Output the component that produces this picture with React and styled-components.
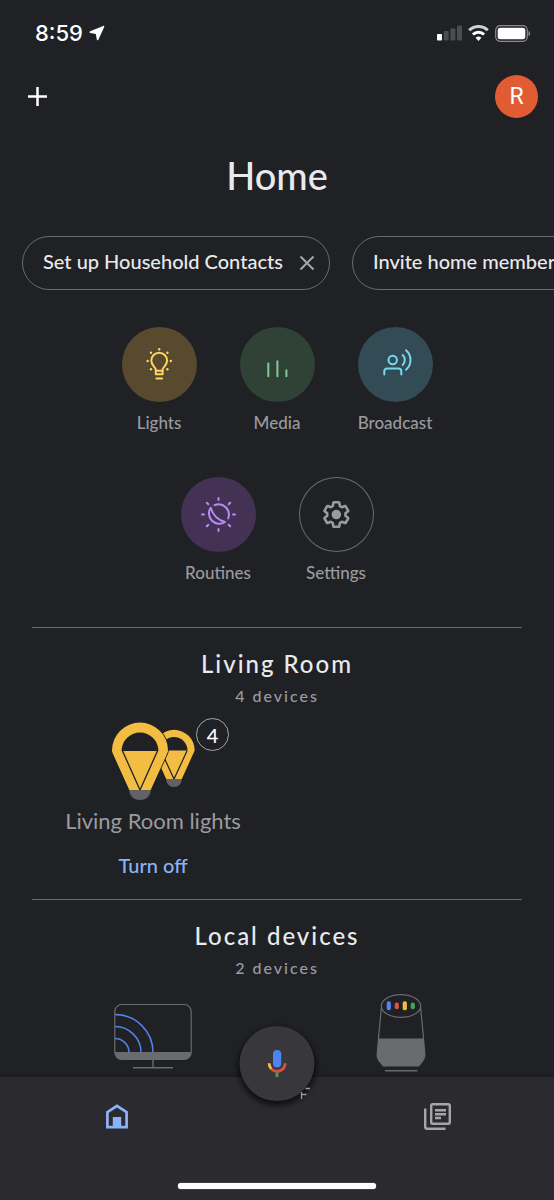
import styled, { createGlobalStyle } from 'styled-components';

const GlobalStyle = createGlobalStyle`
	* {
		box-sizing: border-box;
	}

	body {
		margin: 0;
		background-color: #202124;
		color: #e8eaed;
		font-family: Lato, 'Open Sans', sans-serif;
	}

	button {
		padding: 0;
		border: none;
		background: none;
		color: inherit;
		font: inherit;
		cursor: pointer;
	}

	h1,
	h2,
	p {
		margin: 0;
	}

	svg {
		display: block;
		flex-shrink: 0;
	}
`;

const Page = styled.div`
	display: flex;
	flex-direction: column;
	min-height: 100vh;
	overflow-x: clip;
`;

const StatusBar = styled.div`
	display: flex;
	align-items: center;
	justify-content: space-between;
	height: 66px;
	padding: 0 23px 0 35px;
	color: #fff;
`;

const StatusGroup = styled.div`
	display: flex;
	align-items: center;
	gap: 6px;
`;

const Clock = styled.time`
	font-family: Inter, sans-serif;
	font-size: 22px;
	font-weight: 500;
`;

const Header = styled.header`
	display: flex;
	align-items: center;
	justify-content: space-between;
	padding: 9px 16px 0;
`;

const RoundButton = styled.button`
	display: flex;
	align-items: center;
	justify-content: center;
	width: 43px;
	height: 43px;
	border-radius: 50%;
	background-color: ${({ $background = 'transparent' }) => $background};
	font-family: Roboto, sans-serif;
	font-size: 23px;
	color: #fff;
`;

const Title = styled.h1`
	padding-top: 33px;
	font-size: 38px;
	font-weight: 500;
	line-height: 48px;
	text-align: center;
`;

const Chips = styled.div`
	display: flex;
	gap: 22px;
	margin-top: 37px;
	padding-left: 22px;
	overflow: hidden;
`;

const ChipBox = styled.div`
	display: flex;
	flex-shrink: 0;
	align-items: center;
	gap: 16px;
	height: 54px;
	padding: 0 14px 0 20px;
	border: 1px solid #6a6b6f;
	border-radius: 27px;
	font-size: 20px;
	font-weight: 500;
	white-space: nowrap;
`;

const ChipLabel = styled.button`
	padding-bottom: 4px;
`;

const Actions = styled.div`
	display: flex;
	flex-wrap: wrap;
	justify-content: center;
	row-gap: 42px;
	width: 354px;
	max-width: 100%;
	margin: 37px auto 42px;
`;

const ActionButton = styled.button`
	display: flex;
	flex-direction: column;
	align-items: center;
	gap: 9px;
	width: 118px;
	color: #9a9b9f;
	font-size: 17px;
	font-weight: 500;
	line-height: 24px;
`;

const ActionCircle = styled.span`
	display: block;
	width: 75px;
	height: 75px;
	border-radius: 50%;
	background-color: ${({ $background = 'transparent' }) => $background};
	box-shadow: ${({ $outlined }) => ($outlined ? 'inset 0 0 0 1px #6a6b6f' : 'none')};
	color: ${({ $color }) => $color};
`;

const Room = styled.section`
	&::before {
		content: '';
		display: block;
		height: 1px;
		margin: 0 32px;
		background-color: #6a6b6f;
	}
`;

const RoomTitle = styled.h2`
	padding-top: 20px;
	font-size: 24px;
	font-weight: 500;
	letter-spacing: 2px;
	line-height: 32px;
	text-align: center;
`;

const RoomCount = styled.p`
	padding: 4px 0;
	color: #9a9b9f;
	font-size: 16px;
	font-weight: 500;
	letter-spacing: 2px;
	line-height: 24px;
	text-align: center;
`;

const DeviceGrid = styled.div`
	display: grid;
	grid-template-columns: 1fr 1fr;
	justify-items: center;
	padding: 10px 29px 0;
`;

const Device = styled.div`
	display: flex;
	flex-direction: column;
	align-items: center;
`;

const DeviceArt = styled.div`
	position: relative;
`;

const Badge = styled.span`
	position: absolute;
	top: -4px;
	left: 85px;
	display: flex;
	align-items: center;
	justify-content: center;
	width: 33px;
	height: 33px;
	border: 1px solid #a5a6aa;
	border-radius: 50%;
	color: #fff;
	font-size: 20px;
	font-weight: 500;
`;

const DeviceName = styled.p`
	padding-top: 5px;
	color: #9a9b9f;
	font-size: 22px;
	line-height: 32px;
`;

const TextButton = styled.button`
	margin: 12px 0 18px;
	color: #8ab4f8;
	font-size: 20px;
	font-weight: 500;
	line-height: 32px;
`;

const Nav = styled.nav`
	position: sticky;
	bottom: 0;
	display: flex;
	flex-direction: column;
	align-items: center;
	margin-top: auto;
	background-color: #2b2b2f;
	box-shadow: 0 -1px 4px rgba(0, 0, 0, 0.25);
`;

const NavItems = styled.div`
	display: flex;
	justify-content: space-between;
	width: 100%;
	padding: 0 95px;
`;

const NavLink = styled.a`
	display: flex;
	align-items: center;
	justify-content: center;
	width: 44px;
	height: 78px;
	color: ${({ $active }) => ($active ? '#8ab4f8' : '#a5a6aa')};
`;

const MicButton = styled.button`
	position: absolute;
	top: -51px;
	left: 50%;
	width: 75px;
	height: 75px;
	border-radius: 50%;
	background-color: #38373b;
	box-shadow: 0 3px 5px 2px rgba(0, 0, 0, 0.6);
	transform: translateX(-50%);
`;

const HomeIndicator = styled.div`
	width: 198px;
	height: 6px;
	margin: 28px 0 11px;
	border-radius: 3px;
	background-color: #fff;
	box-shadow: 0 0 1px #fff;
`;

const LocationIcon = () => (
	<svg width="16" height="16" viewBox="0 0 16 16" fill="currentColor">
		<path d="M14.2.9 1.1 6.3c-.9.4-.8 1.5.2 1.7l5.500.9 1 5.500c.2 1 1.300 1.200 1.700.2L15.200 2c.3-.8-.2-1.400-1-1.100z" />
	</svg>
);

const SignalIcon = () => (
	<svg width="25" height="16" viewBox="0 0 25 16" fill="#4c4d50">
		<rect y="9" width="5" height="6.5" rx="1" fill="#fff" />
		<rect x="6.7" y="6" width="5" height="9.5" rx="1" />
		<rect x="13.4" y="3.5" width="5" height="12" rx="1" />
		<rect x="20" y=".5" width="5" height="15" rx="1" />
	</svg>
);

const WifiIcon = () => (
	<svg width="21" height="16" viewBox="0 0 21 16" fill="none" stroke="#fff" strokeWidth="3">
		<path d="M1.2 5.3a13.2 13.2 0 0 1 18.6 0" stroke="#cfd0d2" />
		<path d="M4.9 9.5a8 8 0 0 1 11.2 0" />
		<path d="M10.5 16 7.6 12.7a4.3 4.3 0 0 1 5.8 0z" fill="#fff" stroke="none" />
	</svg>
);

const BatteryIcon = () => (
	<svg width="36" height="17" viewBox="0 0 36 17">
		<rect x=".7" y=".7" width="31.6" height="15.6" rx="4.5" fill="none" stroke="#8a8b8e" strokeWidth="1.2" />
		<rect x="2.7" y="2.7" width="27.6" height="11.6" rx="2.5" fill="#fff" />
		<path d="M33.5 6c2.2.6 2.2 4.4 0 5z" fill="#8a8b8e" />
	</svg>
);

const PlusIcon = () => (
	<svg width="19" height="19" viewBox="0 0 19 19" stroke="#fff" strokeWidth="2.5">
		<path d="M9.5 0v19M0 9.5h19" />
	</svg>
);

const CloseIcon = () => (
	<svg width="16" height="16" viewBox="0 0 16 16" stroke="#a5a6aa" strokeWidth="2">
		<path d="m1.5 1.5 13 13m0-13-13 13" />
	</svg>
);

const ActionSvg = ({ children }) => (
	<svg
		width="75"
		height="75"
		viewBox="0 0 75 75"
		fill="none"
		stroke="currentColor"
		strokeWidth="2"
		strokeLinecap="round"
		strokeLinejoin="round"
	>
		{children}
	</svg>
);

const LightsIcon = () => (
	<ActionSvg>
		<path d="M33.8 47.3v-4.8c0-2-4.5-3.7-4.5-8.9a7.9 7.9 0 0 1 15.8 0c0 5.2-4.5 6.9-4.5 8.9v4.8z" />
		<path d="M34 43.7h6.4M34.3 51.5h5.8" />
		<g fill="currentColor" stroke="none">
			<circle cx="37.2" cy="22.3" r="1.2" />
			<circle cx="29" cy="25.8" r="1.2" />
			<circle cx="45.4" cy="25.8" r="1.2" />
			<circle cx="25.6" cy="34" r="1.2" />
			<circle cx="48.8" cy="34" r="1.2" />
			<circle cx="29" cy="42.2" r="1.2" />
			<circle cx="45.4" cy="42.2" r="1.2" />
		</g>
	</ActionSvg>
);

const MediaIcon = () => (
	<ActionSvg>
		<path d="M28.3 36.5v12.7M37.4 34.3v14.9M46.4 43.3v5.9" />
	</ActionSvg>
);

const BroadcastIcon = () => (
	<ActionSvg>
		<circle cx="34.7" cy="33" r="4.2" />
		<path d="M26.3 47.5v-3.3a2.8 2.8 0 0 1 2.8-2.8h11.4a2.8 2.8 0 0 1 2.8 2.8v3.3" />
		<path d="M44.7 28c2.800 2.600 2.800 7.400 0 10M48 23.300c6 5.200 6 14.200 0 19.400" />
	</ActionSvg>
);

const RoutinesIcon = () => (
	<ActionSvg>
		<path d="M33.6 28.2a10.3 10.3 0 0 1 13.6 13.2" />
		<path d="M29.7 30.7a10.3 10.3 0 0 0 14.3 14.3c-6.5-1.7-12.3-7-14.3-14.3z" />
		<path d="M37.5 21v2M37.5 52v2M21 37.5h2M52 37.5h2M25.8 25.8l1.5 1.5M47.7 47.7l1.5 1.5M25.8 49.2l1.5-1.5M47.7 27.3l1.5-1.5" />
	</ActionSvg>
);

const SettingsIcon = () => (
	<ActionSvg>
		<g transform="translate(22.7 22.9) scale(1.22)">
			<path
				strokeWidth="2.1"
				d="M19.43 12.98c.04-.32.07-.64.07-.98s-.03-.66-.07-.98l2.11-1.65c.19-.15.24-.42.12-.64l-2-3.46c-.09-.16-.26-.25-.44-.25-.06 0-.12.01-.17.03l-2.49 1c-.52-.4-1.08-.73-1.69-.98l-.38-2.65C14.46 2.18 14.25 2 14 2h-4c-.25 0-.46.18-.49.42l-.38 2.65c-.61.25-1.17.59-1.69.98l-2.49-1c-.06-.02-.12-.03-.18-.03-.17 0-.34.09-.43.25l-2 3.46c-.13.22-.07.49.12.64l2.11 1.65c-.04.32-.07.65-.07.98s.03.66.07.98l-2.11 1.65c-.19.15-.24.42-.12.64l2 3.46c.09.16.26.25.44.25.06 0 .12-.01.17-.03l2.49-1c.52.4 1.08.73 1.69.98l.38 2.65c.03.24.24.42.49.42h4c.25 0 .46-.18.49-.42l.38-2.65c.61-.25 1.17-.59 1.69-.98l2.49 1c.06.02.12.03.18.03.17 0 .34-.09.43-.25l2-3.46c.12-.22.07-.49-.12-.64z"
			/>
			<circle cx="12" cy="12" r="3.9" fill="currentColor" stroke="none" />
		</g>
	</ActionSvg>
);

const BulbsArt = () => (
	<svg width="84" height="78" viewBox="0 0 84 78">
		<path d="M42.3 28.5a20.7 20.7 0 0 1 41.4 0L70.8 57H55.2z" fill="#f2bd42" />
		<path d="M49.5 28.5a13.5 13.5 0 0 1 27 0z" fill="#202124" />
		<path d="M49.8 28.5 63 57l13.2-28.5" fill="none" stroke="#202124" strokeWidth="1.2" />
		<path d="M55.2 57h15.6c0 4.5-3.3 8-7.8 8s-7.8-3.5-7.8-8z" fill="#616266" />
		<path
			d="M1 28.5a28 28 0 0 1 56 0c0 1-.2 1.8-.6 2.6L39.7 68H18.3L1.6 31.1A6 6 0 0 1 1 28.5z"
			fill="#f2bd42"
			stroke="#202124"
			strokeWidth="1.6"
			paintOrder="stroke"
		/>
		<path d="M10.5 29a18.5 18.5 0 0 1 37 0z" fill="#202124" />
		<path d="M11.3 28.5 29 68l17.7-39.5" fill="none" stroke="#202124" strokeWidth="1.3" />
		<path d="M18.3 68h21.4c0 6-4.5 10-10.7 10s-10.7-4-10.7-10z" fill="#616266" />
	</svg>
);

const TvArt = () => (
	<svg width="78" height="78" viewBox="0 0 78 78" fill="none">
		<path d="M1 58h76c0 4.5-2.5 7.5-7 7.5H8c-4.5 0-7-3-7-7.5z" fill="#6a6b6f" />
		<g stroke="#5283ea" strokeWidth="1.5">
			<path d="M1 44.5a14 14 0 0 1 14 14M1 32.5a26 26 0 0 1 26 26M1 20.5a38 38 0 0 1 38 38" />
		</g>
		<rect x=".8" y="10.5" width="76.4" height="55" rx="7" stroke="#6a6b6f" strokeWidth="1.2" />
		<path d="M39 58v15.5M19 73.7h40" stroke="#6a6b6f" strokeWidth="1.4" />
	</svg>
);

const SpeakerArt = () => (
	<svg width="52" height="78" viewBox="0 0 52 78" fill="none" stroke="#6a6b6f" strokeWidth="1.2">
		<path d="M3.5 45h45l1.4 16c0 4-3 7.500-6.400 11h-35C5 68.500 2.100 65 2.100 61z" fill="#6a6b6f" />
		<path d="M6.4 13.5 3.4 45M45.6 13.5l3 31.5" />
		<ellipse cx="26" cy="12" rx="19.7" ry="11.4" />
		<path d="M10 76.8h32.5" strokeWidth="1.5" />
		<g stroke="none">
			<rect x="11.7" y="7.3" width="4.2" height="9" rx="1.8" fill="#4f83ee" />
			<rect x="19.7" y="8.5" width="4.2" height="6.8" rx="2" fill="#d9514a" />
			<rect x="27.7" y="7.3" width="4.2" height="9" rx="1.8" fill="#f2bd42" />
			<rect x="35.7" y="8.5" width="4.2" height="6.8" rx="2" fill="#46a35f" />
		</g>
	</svg>
);

const MicIcon = () => (
	<svg width="75" height="75" viewBox="0 0 75 75" fill="none" strokeWidth="2.8">
		<rect x="33.5" y="24" width="8.2" height="17.5" rx="4.1" fill="#4f83ee" />
		<path d="M29.6 37.3a8 8 0 0 0 2.4 5.7" stroke="#f2bd42" />
		<path d="M32 43a8 8 0 0 0 13.6-5.7" stroke="#dc4f42" />
		<path d="M37.5 46.5V51" stroke="#46a35f" />
		<path d="M66 62.5h4.5M62 66v7M62 68.5h5" stroke="#9a9b9f" strokeWidth="1.3" />
	</svg>
);

const HomeIcon = () => (
	<svg width="22" height="25" viewBox="0 0 22 25">
		<path d="M1.4 23.1V8.2L11 1.9l9.6 6.3v14.9z" fill="none" stroke="currentColor" strokeWidth="2.7" />
		<path d="M6.8 13h8.4v10H6.8z" fill="currentColor" />
	</svg>
);

const FeedIcon = () => (
	<svg width="27" height="27" viewBox="0 0 27 27" fill="none" stroke="currentColor" strokeWidth="2.4">
		<rect x="7.2" y="1.2" width="18.6" height="19.6" rx="1.5" />
		<path d="M1.2 5.5v18.3a2 2 0 0 0 2 2h18.3M11 7.3h11M11 11.3h11M11 15h6" />
	</svg>
);

const Chip = ({ text, onClose }) => (
	<ChipBox>
		<ChipLabel type="button">{text}</ChipLabel>
		<button type="button" aria-label="Dismiss" onClick={onClose}>
			<CloseIcon />
		</button>
	</ChipBox>
);

const Action = ({ label, icon: Icon, color, background, outlined }) => (
	<ActionButton type="button">
		<ActionCircle $background={background} $color={color} $outlined={outlined}>
			<Icon />
		</ActionCircle>
		{label}
	</ActionButton>
);

const ACTIONS = [
	{ label: 'Lights', icon: LightsIcon, color: '#fdd663', background: '#574a2e' },
	{ label: 'Media', icon: MediaIcon, color: '#81c995', background: '#304236' },
	{ label: 'Broadcast', icon: BroadcastIcon, color: '#78d9ec', background: '#324b55' },
	{ label: 'Routines', icon: RoutinesIcon, color: '#b98af5', background: '#443255' },
	{ label: 'Settings', icon: SettingsIcon, color: '#9a9b9f', outlined: true },
];

export default function App() {
	return (
		<Page>
			<GlobalStyle />
			<StatusBar>
				<StatusGroup>
					<Clock>8:59</Clock>
					<LocationIcon />
				</StatusGroup>
				<StatusGroup>
					<SignalIcon />
					<WifiIcon />
					<BatteryIcon />
				</StatusGroup>
			</StatusBar>
			<Header>
				<RoundButton type="button" aria-label="Add">
					<PlusIcon />
				</RoundButton>
				<RoundButton type="button" $background="#e25c33">
					R
				</RoundButton>
			</Header>
			<main>
				<Title>Home</Title>
				<Chips>
					<Chip text="Set up Household Contacts" />
					<Chip text="Invite home members" />
				</Chips>
				<Actions>
					{ACTIONS.map((action) => (
						<Action key={action.label} {...action} />
					))}
				</Actions>
				<Room>
					<RoomTitle>Living Room</RoomTitle>
					<RoomCount>4 devices</RoomCount>
					<DeviceGrid>
						<Device>
							<DeviceArt>
								<BulbsArt />
								<Badge>4</Badge>
							</DeviceArt>
							<DeviceName>Living Room lights</DeviceName>
							<TextButton type="button">Turn off</TextButton>
						</Device>
					</DeviceGrid>
				</Room>
				<Room>
					<RoomTitle>Local devices</RoomTitle>
					<RoomCount>2 devices</RoomCount>
					<DeviceGrid>
						<Device>
							<TvArt />
						</Device>
						<Device>
							<SpeakerArt />
						</Device>
					</DeviceGrid>
				</Room>
			</main>
			<Nav>
				<NavItems>
					<NavLink href="#home" aria-label="Home" $active>
						<HomeIcon />
					</NavLink>
					<NavLink href="#feed" aria-label="Feed">
						<FeedIcon />
					</NavLink>
				</NavItems>
				<MicButton type="button" aria-label="Assistant">
					<MicIcon />
				</MicButton>
				<HomeIndicator />
			</Nav>
		</Page>
	);
}
